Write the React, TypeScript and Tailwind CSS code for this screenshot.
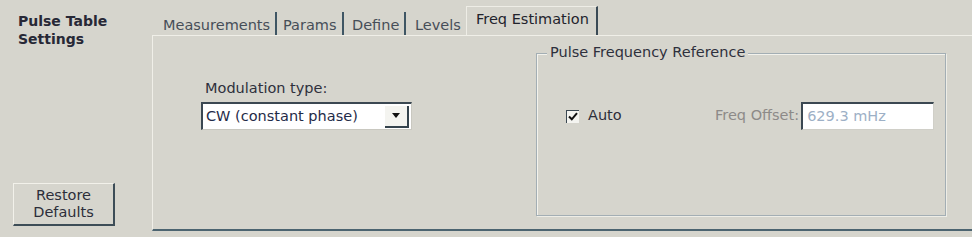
import React from "react";

const tabs = [
  { id: 1, label: "Measurements", w: "w-[119px]", pl: "pl-[5px]", sep: true },
  { id: 2, label: "Params", w: "w-[67px]", pl: "pl-[6px]", sep: true },
  { id: 3, label: "Define", w: "w-[62px]", pl: "pl-[8px]", sep: true },
  { id: 4, label: "Levels", w: "w-[60px]", pl: "pl-[9px]", sep: false },
];

const Tabs: React.FC = () => {
  return (
    <div className="flex items-end h-[35px] pl-[6px]">
      {tabs.map((t) => (
        <div
          key={t.id}
          className={
            t.sep
              ? `${t.w} ${t.pl} h-[23px] border-r-2 border-[#3f5664] text-[#464e58] leading-[22px] pt-[2px]`
              : `${t.w} ${t.pl} h-[23px] text-[#464e58] leading-[22px] pt-[2px]`
          }
        >
          {t.label}
        </div>
      ))}
      <div className="w-[132px] h-[29px] pl-[9px] border-t border-l border-[#eeede6] border-r-2 border-r-[#3a4a55] text-[#22232c] leading-[22px] pt-[1px]">
        Freq Estimation
      </div>
    </div>
  );
};

const App: React.FC = () => {
  return (
    <div className="w-[972px] h-[237px] bg-[#d6d5cd] flex font-['DejaVu_Sans',sans-serif] text-[14.5px] overflow-hidden">
      {/* left column */}
      <div className="w-[152px] flex flex-col shrink-0">
        <div className="pl-[18px] pt-[12px] font-bold text-[14px] leading-[18px] text-[#272836]">
          <div>Pulse Table</div>
          <div>Settings</div>
        </div>
        <button className="mt-auto mb-[11px] ml-[13px] w-[102px] h-[43px] bg-[#d6d5cd] border-t border-l border-[#f2f1ea] border-r-2 border-b-2 border-r-[#3d4d57] border-b-[#3d4d57] text-[#2c2e3a] text-[14.5px] leading-[17px] text-center">
          Restore
          <br />
          Defaults
        </button>
      </div>

      {/* right side */}
      <div className="flex-1 flex flex-col">
        <Tabs />
        <div className="flex-1 mb-[6px] border-l border-t border-[#f0efe8] border-b-2 border-b-[#4c6470] flex">
          <div className="w-[383px] shrink-0 pl-[48px] pt-[43px]">
            <div className="pl-[4px] leading-[18px] text-[#2e303c]">Modulation type:</div>
            <div className="mt-[5px] w-[211px] h-[28px] bg-white border-t-2 border-l-2 border-[#3b4852] border-r border-b border-r-[#c9c8c0] border-b-[#c9c8c0] flex items-center">
              <span className="pl-[3px] text-[#1f2b48] flex-1">CW (constant phase)</span>
              <span className="w-[24px] h-[22px] mr-[2px] bg-[#f4f4f0] border-r-2 border-b-2 border-[#35434d] flex items-center justify-center">
                <svg width="8" height="5" viewBox="0 0 8 5">
                  <path d="M0 0 L8 0 L4 5 Z" fill="#111" />
                </svg>
              </span>
            </div>
          </div>

          <div className="relative w-[410px] h-[163px] mt-[17px] border border-[#a3aeb4] shadow-[inset_1px_1px_0_#f3f2ec,1px_1px_0_#eeede6]">
            <span className="absolute -top-[11px] left-[10px] px-[3px] bg-[#d6d5cd] leading-[18px] text-[#2e303c]">
              Pulse Frequency Reference
            </span>
            <div className="flex items-center mt-[48px] pl-[29px]">
              <div className="w-[149px] flex items-center">
                <span className="w-[13px] h-[13px] bg-[#f4f4f0] border-t border-l border-[#3b4852] flex items-center justify-center">
                  <svg width="10" height="9" viewBox="0 0 10 9">
                    <path d="M1 4.5 L3.8 7.3 L9 1.2" stroke="#111" strokeWidth="2" fill="none" />
                  </svg>
                </span>
                <span className="ml-[9px] text-[#2c2e3a]">Auto</span>
              </div>
              <span className="text-[#8d8a88]">Freq Offset:</span>
              <div className="ml-[2px] w-[133px] h-[28px] bg-white border-t-2 border-l-2 border-[#3b4852] border-r border-b border-r-[#d0cfc8] border-b-[#d0cfc8] flex items-center pl-[4px] text-[#9db0c6]">
                629.3 mHz
              </div>
            </div>
          </div>
        </div>
      </div>
    </div>
  );
};

export default App;
